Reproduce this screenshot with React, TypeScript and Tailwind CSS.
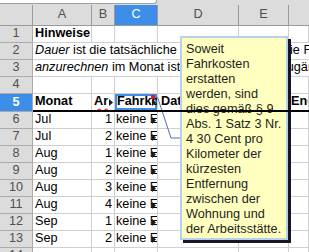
import React from 'react';

const dataRows = [
  { n: 6, month: 'Jul', nr: 1 },
  { n: 7, month: 'Jul', nr: 2 },
  { n: 8, month: 'Aug', nr: 1 },
  { n: 9, month: 'Aug', nr: 2 },
  { n: 10, month: 'Aug', nr: 3 },
  { n: 11, month: 'Aug', nr: 4 },
  { n: 12, month: 'Sep', nr: 1 },
  { n: 13, month: 'Sep', nr: 2 },
];

const noteLines = [
  'Soweit',
  'Fahrkosten',
  'erstatten',
  'werden, sind',
  'dies gemäß § 9',
  'Abs. 1 Satz 3 Nr.',
  '4 30 Cent pro',
  'Kilometer der',
  'kürzesten',
  'Entfernung',
  'zwischen der',
  'Wohnung und',
  'der Arbeitsstätte.',
];

// little arrow LibreOffice draws when text is cut off by the next cell
const Clipped = () => (
  <svg className="absolute right-[1px] top-[5px] w-[4px] h-[7px]" viewBox="0 0 4 7">
    <polygon points="0,0 4,3.5 0,7" fill="#1a1a1a" />
  </svg>
);

const RowHead = ({ n, active = false }: { n: number; active?: boolean }) => (
  <div
    className={
      active
        ? 'w-[33px] shrink-0 h-full flex items-center justify-center bg-[#3d8ee8] text-white font-bold border-r border-b border-[#a8a8a8]'
        : 'w-[33px] shrink-0 h-full flex items-center justify-center bg-[#dcdcdc] text-[#505050] border-r border-b border-[#ababab]'
    }
  >
    {n}
  </div>
);

const Cell = ({ w, className = '', children }: { w: string; className?: string; children?: React.ReactNode }) => (
  <div className={`${w} shrink-0 h-full relative flex items-center overflow-hidden whitespace-nowrap border-r border-b border-[#d0d0d0] ${className}`}>
    {children}
  </div>
);

export default function App() {
  return (
    <div className="relative w-[309px] h-[252px] overflow-hidden bg-white text-[12.7px] text-black font-['Liberation_Sans',Arial,sans-serif]">
      {/* formula bar edge */}
      <div className="h-[5px] bg-[#dcdcdc]">
        <div className="w-[157px] h-[4px] bg-white border-b border-r border-[#a0a0a0] rounded-br-[3px]" />
      </div>

      {/* column headers */}
      <div className="flex h-[21px] bg-[#dcdcdc] text-[#505050] border-b border-[#9a9a9a]">
        <div className="w-[33px] shrink-0 border-r border-[#9a9a9a]" />
        <div className="w-[59px] shrink-0 flex items-center justify-center border-r border-[#9a9a9a]">A</div>
        <div className="w-[23px] shrink-0 flex items-center justify-center border-r border-[#9a9a9a]">B</div>
        <div className="w-[43px] shrink-0 flex items-center justify-center bg-[#3d8ee8] text-white border-r border-[#9a9a9a]">C</div>
        <div className="w-[81px] shrink-0 flex items-center justify-center border-r border-[#9a9a9a]">D</div>
        <div className="w-[50px] shrink-0 flex items-center justify-center border-r border-[#9a9a9a]">E</div>
        <div className="flex-1" />
      </div>

      {/* row 1 */}
      <div className="flex h-[17px]">
        <RowHead n={1} />
        <Cell w="w-[59px]" className="pl-[2px] font-bold">Hinweise</Cell>
        <Cell w="w-[23px]" />
        <Cell w="w-[43px]" />
        <Cell w="w-[81px]" />
        <Cell w="w-[50px]" />
        <Cell w="flex-1" />
      </div>

      {/* rows 2 and 3 overflow across the empty cells */}
      <div className="flex h-[17px]">
        <RowHead n={2} />
        <div className="flex-1 flex items-center pl-[2px] overflow-hidden whitespace-nowrap border-b border-[#d0d0d0]">
          <i>Dauer</i>&nbsp;ist die tatsächliche Zeiten der Reise,&thinsp; die Fahrtzeit und die Wartezeit
        </div>
      </div>
      <div className="flex h-[17px]">
        <RowHead n={3} />
        <div className="flex-1 flex items-center pl-[2px] overflow-hidden whitespace-nowrap border-b border-[#d0d0d0]">
          <i>anzurechnen</i>&nbsp;im Monat ist die Summe aller Zugänge
        </div>
      </div>

      {/* row 4 */}
      <div className="flex h-[17px]">
        <RowHead n={4} />
        <Cell w="w-[59px]" />
        <Cell w="w-[23px]" />
        <Cell w="w-[43px]" />
        <Cell w="w-[81px]" />
        <Cell w="w-[50px]" />
        <Cell w="flex-1" />
      </div>

      {/* row 5: column titles */}
      <div className="flex h-[18px] font-bold">
        <RowHead n={5} active />
        <Cell w="w-[59px]" className="pl-[2px] border-b-2 border-b-black">Monat</Cell>
        <Cell w="w-[23px]" className="pl-[2px] border-b-2 border-b-black">
          <span className="underline decoration-wavy decoration-red-500 underline-offset-2">Ar</span>
          <Clipped />
        </Cell>
        <Cell w="w-[43px]" className="pl-[2px] border-b-2 border-b-black shadow-[inset_0_0_0_2px_#3d8ee8]">
          Fahrkosten
          <div className="absolute top-[1px] right-[2px] w-[4px] h-[4px] bg-[#e01b1b]" />
          <Clipped />
        </Cell>
        <Cell w="w-[81px]" className="pl-[3px] border-b-2 border-b-black">Datum</Cell>
        <Cell w="w-[50px]" className="pl-[2px] border-b-2 border-b-black">Beginn</Cell>
        <Cell w="flex-1" className="pl-[2px] border-b-2 border-b-black">Ende</Cell>
      </div>

      {/* data rows */}
      {dataRows.map((r) => (
        <div key={r.n} className="flex h-[17px]">
          <RowHead n={r.n} />
          <Cell w="w-[59px]" className="pl-[2px]">{r.month}</Cell>
          <Cell w="w-[23px]" className="justify-end pr-[2px]">{r.nr}</Cell>
          <Cell w="w-[43px]" className="pl-[1px]">
            keine Erstattung
            <Clipped />
          </Cell>
          <Cell w="w-[81px]" />
          <Cell w="w-[50px]" />
          <Cell w="flex-1" />
        </div>
      ))}

      {/* row 14, cut off by the window */}
      <div className="flex h-[17px]">
        <RowHead n={14} />
        <Cell w="w-[59px]" />
        <Cell w="w-[23px]" />
        <Cell w="w-[43px]" />
        <Cell w="w-[81px]" />
        <Cell w="w-[50px]" />
        <Cell w="flex-1" />
      </div>

      {/* comment note on C5 */}
      <svg className="absolute inset-0 w-[309px] h-[252px] pointer-events-none" viewBox="0 0 309 252">
        <polyline points="157.5,97 171,138 181,138" fill="none" stroke="#4f72a8" strokeWidth="1" />
      </svg>
      <div className="absolute left-[180px] top-[36px] w-[108px] h-[204px] bg-[#ffffc0] border-2 border-[#b5d0ec] shadow-[3px_3px_0_#161624] px-[4px] pt-[4px] text-[#1e1e1e] leading-[15px]">
        {noteLines.map((l) => (
          <div key={l} className="whitespace-nowrap">{l}</div>
        ))}
      </div>
      {/* LibreOffice paints the heading border over the note */}
      <div className="absolute left-[33px] right-0 top-[110px] h-[2px] bg-black" />
    </div>
  );
}
